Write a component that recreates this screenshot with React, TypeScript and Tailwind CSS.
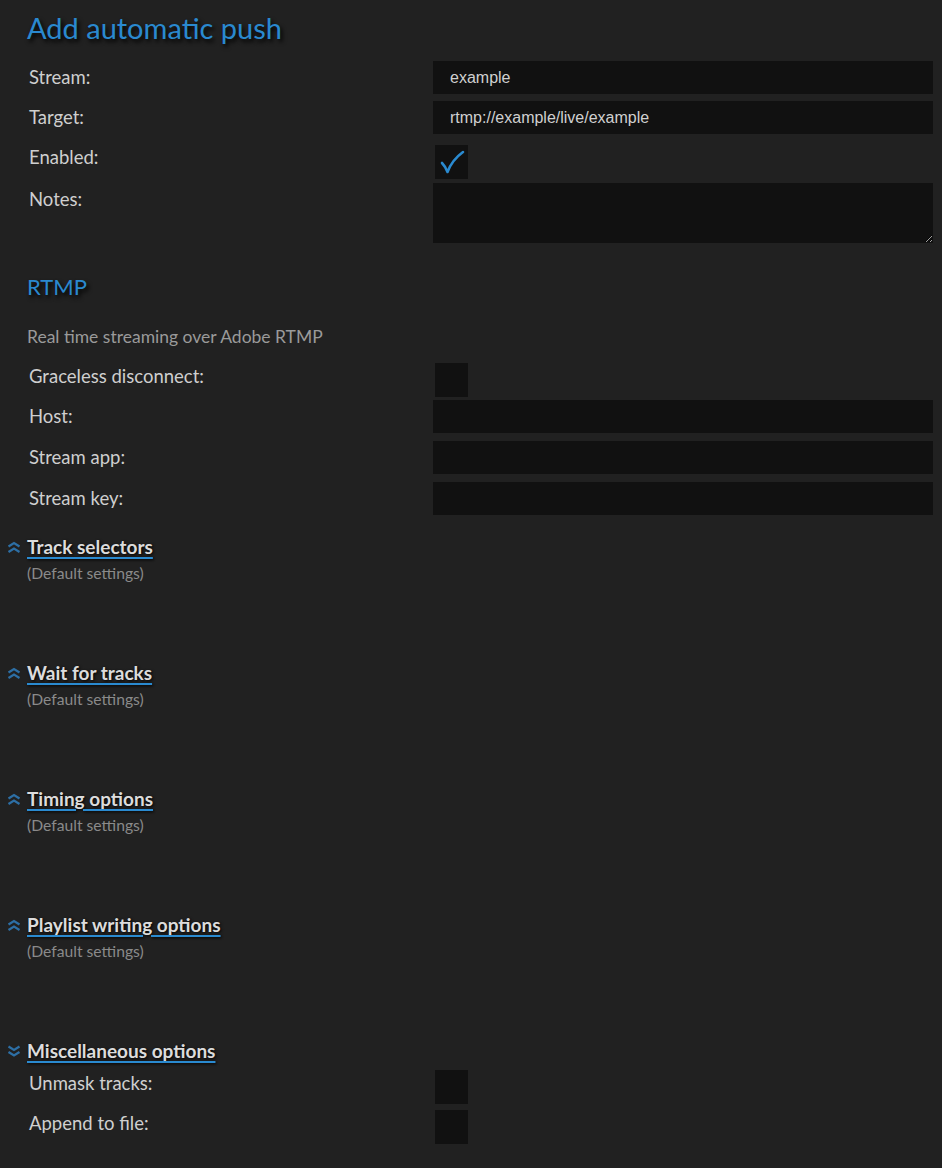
const font = { fontFamily: 'Lato, "Noto Sans", sans-serif' };

function TextRow({ label, value }: { label: string; value?: string }) {
  return (
    <div className="flex items-center h-[33px]">
      <label className="w-[406px] pl-[2px] text-[18.5px] text-[#cfcfcf]">{label}</label>
      <input
        readOnly
        value={value ?? ''}
        className="flex-1 h-[33px] bg-[#111111] px-[17px] text-[16px] text-[#d0d0d0] outline-none"
        style={{ fontFamily: '"Liberation Sans", Arial, sans-serif' }}
      />
    </div>
  );
}

function CheckRow({ label, checked, tall }: { label: string; checked?: boolean; tall?: boolean }) {
  return (
    <div className={`flex items-start ${tall ? 'h-[35px]' : 'h-[33px]'}`}>
      <label className="w-[408px] h-[33px] pl-[2px] flex items-center text-[18.5px] text-[#cfcfcf]">{label}</label>
      <div
        className={`w-[33px] h-[34px] bg-[#111111] flex items-center justify-center ${tall ? 'mt-[4px]' : 'mt-[3px]'}`}
      >
        {checked && (
          <svg width="26" height="26" viewBox="0 0 26 26" fill="none">
            <path d="M3 14 Q6 17 8.5 23 Q13 11 24 3" stroke="#2a8ad0" strokeWidth="2.6" strokeLinecap="round" strokeLinejoin="round" />
          </svg>
        )}
      </div>
    </div>
  );
}

function Chevrons({ down }: { down?: boolean }) {
  return (
    <svg width="14" height="13" viewBox="0 0 14 13" fill="none" className="mr-[6px]">
      {down ? (
        <>
          <path d="M1.5 1.5 L7 5 L12.5 1.5" stroke="#2d6fa5" strokeWidth="2.2" strokeLinejoin="miter" />
          <path d="M1.5 7 L7 10.5 L12.5 7" stroke="#2d6fa5" strokeWidth="2.2" strokeLinejoin="miter" />
        </>
      ) : (
        <>
          <path d="M1.5 5.5 L7 2 L12.5 5.5" stroke="#2d6fa5" strokeWidth="2.2" strokeLinejoin="miter" />
          <path d="M1.5 11 L7 7.5 L12.5 11" stroke="#2d6fa5" strokeWidth="2.2" strokeLinejoin="miter" />
        </>
      )}
    </svg>
  );
}

function Section({ title, open }: { title: string; open?: boolean }) {
  return (
    <div className="flex items-center h-[24px] -ml-[20px]">
      <Chevrons down={open} />
      <span className="text-[19px] font-bold text-[#dcdcdc] underline decoration-[#2a8ad0] decoration-2 underline-offset-[3px] [text-shadow:1px_1px_3px_#000]">
        {title}
      </span>
    </div>
  );
}

function Collapsed({ title }: { title: string }) {
  return (
    <div className="h-[126px]">
      <Section title={title} />
      <div className="mt-[3px] text-[15.7px] text-[#8a8a8a]">(Default settings)</div>
    </div>
  );
}

export default function App() {
  return (
    <div className="min-h-[1168px] bg-[#212121] pl-[27px] pr-[9px] pt-[10px]" style={font}>
      <h1 className="text-[29px] text-[#2a89cf] leading-[36px] [text-shadow:2px_3px_4px_#000]">
        Add automatic push
      </h1>

      <div className="mt-[15px] flex flex-col gap-[7px]">
        <TextRow label="Stream:" value="example" />
        <TextRow label="Target:" value="rtmp://example/live/example" />
        <CheckRow label="Enabled:" checked tall />
        <div className="flex items-start">
          <label className="w-[406px] pl-[2px] pt-[3px] text-[18.5px] text-[#cfcfcf]">Notes:</label>
          <textarea readOnly className="flex-1 h-[60px] bg-[#111111] outline-none" />
        </div>
      </div>

      <h2 className="mt-[30px] text-[22px] text-[#2a89cf] leading-[28px] [text-shadow:2px_3px_4px_#000]">RTMP</h2>
      <p className="mt-[24px] text-[17.5px] leading-[24px] text-[#9a9a9a]">Real time streaming over Adobe RTMP</p>

      <div className="mt-[11px] flex flex-col gap-[7px]">
        <CheckRow label="Graceless disconnect:" />
        <TextRow label="Host:" />
        <div className="mt-[1px]">
          <TextRow label="Stream app:" />
        </div>
        <div className="mt-[1px]">
          <TextRow label="Stream key:" />
        </div>
      </div>

      <div className="mt-[20px]">
        <Collapsed title="Track selectors" />
        <Collapsed title="Wait for tracks" />
        <Collapsed title="Timing options" />
        <Collapsed title="Playlist writing options" />
        <Section title="Miscellaneous options" open />
        <div className="mt-[4px] flex flex-col gap-[7px]">
          <CheckRow label="Unmask tracks:" />
          <CheckRow label="Append to file:" />
        </div>
      </div>
    </div>
  );
}
